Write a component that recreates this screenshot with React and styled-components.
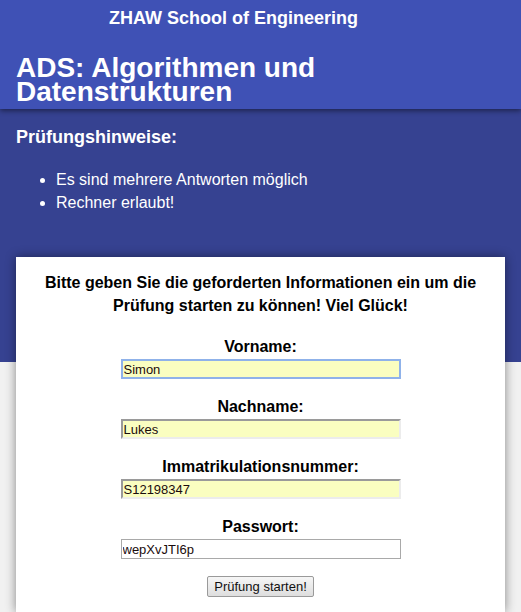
import styled, { createGlobalStyle } from 'styled-components';

const GlobalStyle = createGlobalStyle`
  html, body {
    margin: 0;
    padding: 0;
    background: #f1f1f1;
    font-family: "Liberation Sans", Arial, sans-serif;
  }
`;

const Header = styled.header`
  position: relative;
  z-index: 2;
  background-color: #3f51b5;
  color: #fff;
  padding: 7px 16px 5px;
  box-shadow: 0 2px 5px rgba(0, 0, 0, 0.45);
`;

const Brand = styled.div`
  font-size: 18px;
  font-weight: bold;
  line-height: 22px;
  padding-left: 93px;
`;

const Title = styled.h1`
  margin: 27px 0 0;
  font-size: 28px;
  line-height: 24px;
  font-weight: bold;
`;

const Notes = styled.section`
  position: relative;
  z-index: 1;
  background-color: #364291;
  color: #fff;
  height: 253px;
  box-sizing: border-box;
  padding: 17px 16px 0;
`;

const NotesTitle = styled.h2`
  margin: 0;
  font-size: 18px;
  line-height: 22px;
  font-weight: bold;
`;

const NotesList = styled.ul`
  margin: 20px 0 0;
  padding-left: 40px;
  font-size: 16px;
  line-height: 23px;
`;

const Card = styled.main`
  position: relative;
  z-index: 3;
  margin: -105px 16px 0;
  background: #fff;
  padding: 14px 20px 15px;
  box-shadow: 0 0 10px rgba(0, 0, 0, 0.45);
  text-align: center;
`;

const Intro = styled.p`
  margin: 0 0 20px;
  font-size: 16px;
  line-height: 23px;
  font-weight: bold;
  color: #000;
`;

const Field = styled.div`
  margin-bottom: 18px;
`;

const Label = styled.label`
  display: block;
  font-size: 16px;
  line-height: 20px;
  font-weight: bold;
  color: #000;
  margin-bottom: 2px;
`;

const Input = styled.input`
  box-sizing: border-box;
  width: 280px;
  height: 20px;
  padding: 0 1px;
  font-family: "Liberation Sans", Arial, sans-serif;
  font-size: 13px;
  color: #1a0c0c;
  background: ${(p) => (p.$filled ? '#fafec0' : '#fff')};
  border: ${(p) => (p.$plain ? '1px solid #a9a9a9' : '2px solid')};
  border-color: ${(p) =>
    p.$focused
      ? '#8fb2ea'
      : p.$plain
      ? '#a9a9a9'
      : '#9a9a9a #ececec #ececec #9a9a9a'};
  outline: none;
  display: block;
  margin: 0 auto;
`;

const Button = styled.button`
  margin-top: -2px;
  height: 21px;
  padding: 0 6px;
  font-family: "Liberation Sans", Arial, sans-serif;
  font-size: 13px;
  color: #111;
  background: linear-gradient(#f6f6f6, #dedede);
  border: 1px solid #9a9a9a;
  border-radius: 2px;
`;

const fields = [
  { label: 'Vorname:', value: 'Simon', filled: true, focused: true },
  { label: 'Nachname:', value: 'Lukes', filled: true },
  { label: 'Immatrikulationsnummer:', value: 'S12198347', filled: true },
  { label: 'Passwort:', value: 'wepXvJTI6p', plain: true },
];

export default function App() {
  return (
    <>
      <GlobalStyle />
      <Header>
        <Brand>ZHAW School of Engineering</Brand>
        <Title>
          ADS: Algorithmen und
          <br />
          Datenstrukturen
        </Title>
      </Header>
      <Notes>
        <NotesTitle>Prüfungshinweise:</NotesTitle>
        <NotesList>
          <li>Es sind mehrere Antworten möglich</li>
          <li>Rechner erlaubt!</li>
        </NotesList>
      </Notes>
      <Card>
        <Intro>
          Bitte geben Sie die geforderten Informationen ein um die
          <br />
          Prüfung starten zu können! Viel Glück!
        </Intro>
        {fields.map((f) => (
          <Field key={f.label}>
            <Label>{f.label}</Label>
            <Input
              defaultValue={f.value}
              $filled={f.filled}
              $focused={f.focused}
              $plain={f.plain}
            />
          </Field>
        ))}
        <Button>Prüfung starten!</Button>
      </Card>
    </>
  );
}
